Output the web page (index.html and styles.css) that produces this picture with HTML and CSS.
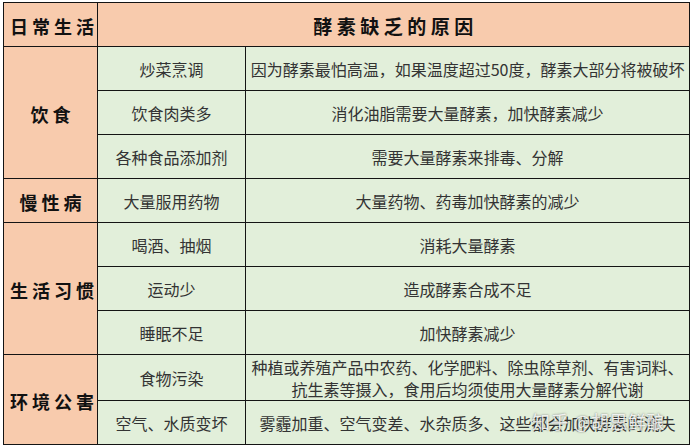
FILE: index.html
```html
<!DOCTYPE html>
<html lang="zh-CN">
<head>
<meta charset="utf-8">
<title>酵素缺乏的原因</title>
<link rel="stylesheet" href="styles.css">
</head>
<body>
<div class="sheet">
  <table class="enzyme">
    <colgroup>
      <col class="c1"><col class="c2"><col class="c3">
    </colgroup>
    <thead>
      <tr>
        <th class="cat">日常生活</th>
        <th class="title" colspan="2">酵素缺乏的原因</th>
      </tr>
    </thead>
    <tbody>
      <tr>
        <th class="cat" rowspan="3">饮食</th>
        <td>炒菜烹调</td>
        <td>因为酵素最怕高温，如果温度超过50度，酵素大部分将被破坏</td>
      </tr>
      <tr>
        <td>饮食肉类多</td>
        <td>消化油脂需要大量酵素，加快酵素减少</td>
      </tr>
      <tr>
        <td>各种食品添加剂</td>
        <td>需要大量酵素来排毒、分解</td>
      </tr>
      <tr>
        <th class="cat">慢性病</th>
        <td>大量服用药物</td>
        <td>大量药物、药毒加快酵素的减少</td>
      </tr>
      <tr>
        <th class="cat" rowspan="3">生活习惯</th>
        <td>喝酒、抽烟</td>
        <td>消耗大量酵素</td>
      </tr>
      <tr>
        <td>运动少</td>
        <td>造成酵素合成不足</td>
      </tr>
      <tr>
        <td>睡眠不足</td>
        <td>加快酵素减少</td>
      </tr>
      <tr>
        <th class="cat" rowspan="2">环境公害</th>
        <td>食物污染</td>
        <td class="two"><span class="ln">种植或养殖产品中农药、化学肥料、除虫除草剂、有害词料、</span><span class="ln">抗生素等摄入，食用后均须使用大量酵素分解代谢</span></td>
      </tr>
      <tr>
        <td>空气、水质变坏</td>
        <td>雾霾加重、空气变差、水杂质多、这些都会加快酵素的流失</td>
      </tr>
    </tbody>
  </table>
  <div class="watermark">知乎 @胡思鲜酿</div>
</div>
</body>
</html>
```
FILE: styles.css
```css
html, body {
  margin: 0;
  padding: 0;
  background: #ffffff;
}
body {
  font-family: "Noto Sans CJK SC", "Liberation Sans", sans-serif;
  color: #333333;
}
.sheet {
  position: relative;
  padding: 2px 0 0 3px;
  width: 690px;
}
.enzyme {
  border-collapse: collapse;
  table-layout: fixed;
  width: 686px;
}
.c1 { width: 94px; }
.c2 { width: 148px; }
.c3 { width: 444px; }
.enzyme th,
.enzyme td {
  border: 1px solid #141414;
  height: 44px;
  padding: 0 2px;
  text-align: center;
  vertical-align: middle;
  font-size: 16px;
  line-height: 20px;
  font-weight: 400;
  white-space: nowrap;
  box-sizing: border-box;
}
.enzyme td {
  background: #e2efda;
  color: #333333;
}
.enzyme th.cat,
.enzyme th.title {
  background: #f8cbad;
  color: #111111;
  font-weight: 700;
  font-size: 18px;
  letter-spacing: 4px;
  padding-left: 6px;
  padding-top: 3px;
}
.enzyme th.title {
  font-size: 19px;
  letter-spacing: 4.5px;
}
.enzyme td.two {
  padding-top: 1px;
}
.ln {
  display: block;
  height: 22px;
  line-height: 22px;
  overflow: hidden;
}
.watermark {
  position: absolute;
  left: 532px;
  top: 410px;
  font-size: 18px;
  line-height: 22px;
  color: rgba(255, 255, 255, 0.85);
  text-shadow: 0 0 2px rgba(60, 60, 60, 0.7);
  letter-spacing: 0.5px;
}
```
